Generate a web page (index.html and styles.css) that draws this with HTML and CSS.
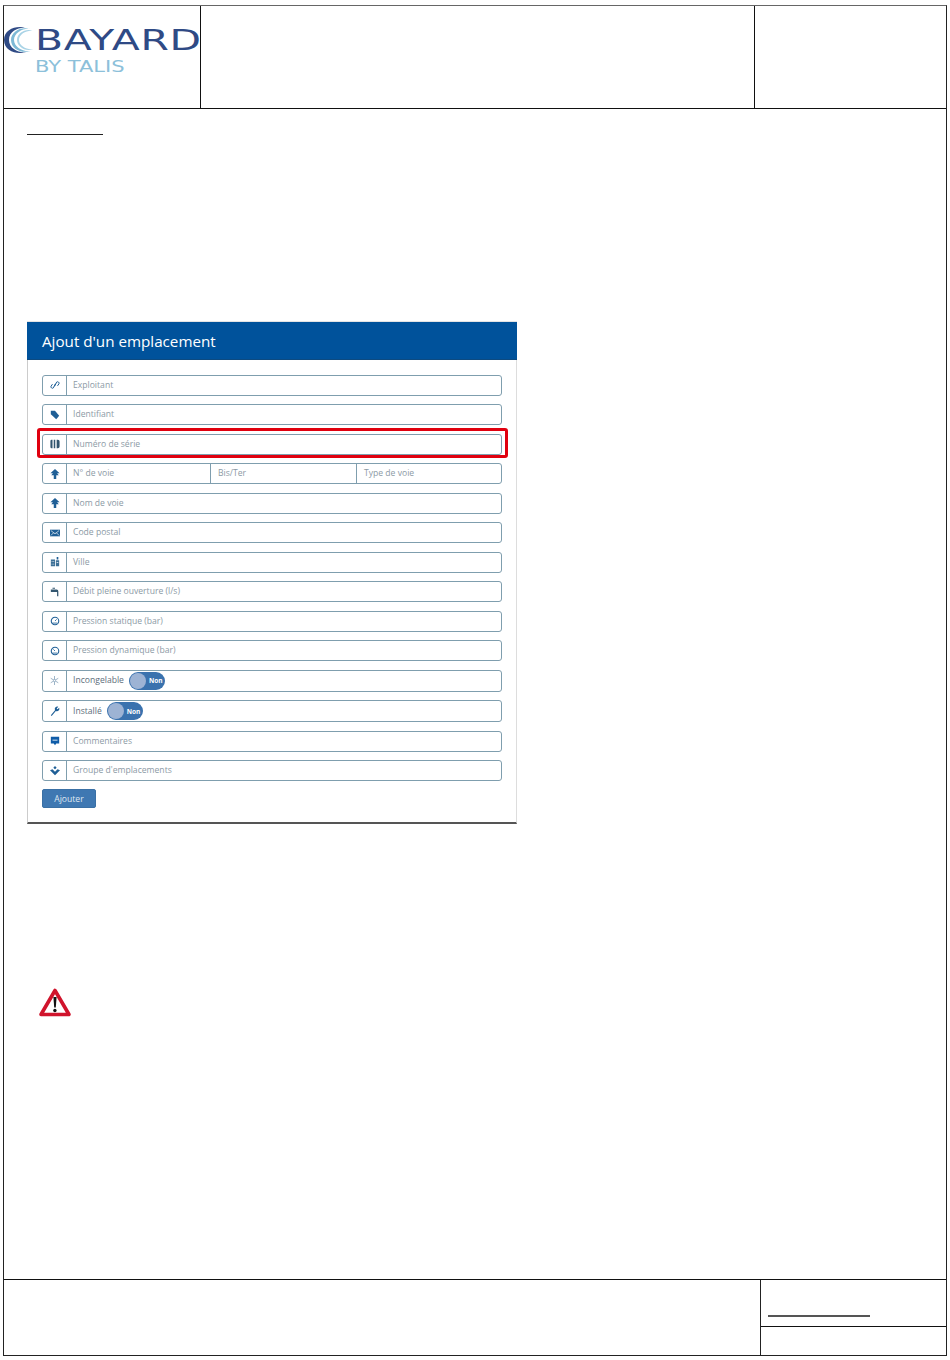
FILE: index.html
```html
<!DOCTYPE html>
<html lang="fr">
<head>
  <meta charset="UTF-8">
  <title>Ajout d'un emplacement</title>
  <link rel="stylesheet" href="styles.css">
</head>
<body>
  <div class="page">
    <header class="doc-head">
      <div class="logo">
        <svg class="logo-mark" viewBox="0 0 32 28" width="32" height="28">
          <path d="M22 2C13 -1 0 3 0 14s13 15 22 12C15 27 5 23 5 14S15 1 22 2z" fill="#2f4a85"/>
          <path d="M26 3C18 0 7 5 7 14s11 14 19 11C19 26 10 21 10 14S19 2 26 3z" fill="#7db9d6"/>
          <path d="M29 5C22 2 13 7 13 14s9 12 16 9C23 24 15 20 15 14S23 4 29 5z" fill="#a9d3e6"/>
        </svg>
        <div class="logo-text">
          <div class="logo-name">BAYARD</div>
          <div class="logo-sub">BY TALIS</div>
        </div>
      </div>
      <div class="head-mid"></div>
      <div class="head-right"></div>
    </header>

    <main class="doc-main">
      <div class="blank-title"></div>

      <section class="card">
        <h2 class="card-head">Ajout d'un emplacement</h2>
        <div class="card-body">
          <div class="row">
            <span class="ico"><svg viewBox="0 0 12 12" width="10" height="10"><path d="M5.500 7.500L8 2.500a1.800 1.800 0 0 1 2.800 2L9 7M6.500 4.500L4 9.500a1.800 1.800 0 0 1-2.800-2L3 5" fill="none" stroke="#1f5f96" stroke-width="1.200"/></svg></span>
            <span class="field">Exploitant</span>
          </div>
          <div class="row">
            <span class="ico"><svg viewBox="0 0 12 12" width="10" height="10"><path d="M1 1h5l5 6-3.500 4L1 5z" fill="#1f5f96"/></svg></span>
            <span class="field">Identifiant</span>
          </div>
          <div class="row row-marked">
            <span class="ico"><svg viewBox="0 0 12 12" width="10" height="10"><path d="M.5 2.500A1.500 1.500 0 0 1 2 1h1v10H2A1.500 1.500 0 0 1 .5 9.500zM4.500 1h1.800v10H4.500zM8 1h1.500A2 2 0 0 1 11.500 3v6a2 2 0 0 1-2 2H8z" fill="#33566f"/></svg></span>
            <span class="field">Numéro de série</span>
          </div>
          <div class="row">
            <span class="ico"><svg viewBox="0 0 12 12" width="10" height="10"><path d="M6 0l5.500 5H8.500l2 2.500H7.500V12h-3V7.500H1.500l2-2.500H.5z" fill="#1f5f96"/></svg></span>
            <span class="field field-third">N° de voie</span>
            <span class="field field-third">Bis/Ter</span>
            <span class="field field-third">Type de voie</span>
          </div>
          <div class="row">
            <span class="ico"><svg viewBox="0 0 12 12" width="10" height="10"><path d="M6 0l5.500 5H8.500l2 2.500H7.500V12h-3V7.500H1.500l2-2.500H.5z" fill="#1f5f96"/></svg></span>
            <span class="field">Nom de voie</span>
          </div>
          <div class="row">
            <span class="ico"><svg viewBox="0 0 12 12" width="10" height="10"><path d="M0 2h12v8H0z" fill="#1f5f96"/><path d="M1 3l5 4 5-4M1 9l3.500-3.500M11 9L7.500 5.500" fill="none" stroke="#fff" stroke-width=".8"/></svg></span>
            <span class="field">Code postal</span>
          </div>
          <div class="row">
            <span class="ico"><svg viewBox="0 0 12 12" width="10" height="10"><path d="M1 3h5v8H1zM7 4h4v7H7z" fill="#3b6f96"/><path d="M8 0h2v3H8z" fill="#1f5f96"/><path d="M2 5h1v1H2zM4 5h1v1H4zM2 8h1v1H2zM4 8h1v1H4zM8 6h2v1H8z" fill="#fff"/></svg></span>
            <span class="field">Ville</span>
          </div>
          <div class="row">
            <span class="ico"><svg viewBox="0 0 12 12" width="10" height="10"><path d="M1 3h7a2 2 0 0 1 2 2v6H8.500V6H1zM3 1h3v1H3z" fill="#33566f"/></svg></span>
            <span class="field">Débit pleine ouverture (l/s)</span>
          </div>
          <div class="row">
            <span class="ico"><svg viewBox="0 0 12 12" width="10" height="10"><circle cx="6" cy="6" r="4.500" fill="none" stroke="#1f5f96" stroke-width="1.300"/><path d="M3 8.500h6M6 6l2-2" stroke="#1f5f96"/></svg></span>
            <span class="field">Pression statique (bar)</span>
          </div>
          <div class="row">
            <span class="ico"><svg viewBox="0 0 12 12" width="10" height="10"><circle cx="6" cy="6" r="4.500" fill="none" stroke="#1f5f96" stroke-width="1.300"/><path d="M3 8.500h6M6 6L4 4" stroke="#1f5f96"/></svg></span>
            <span class="field">Pression dynamique (bar)</span>
          </div>
          <div class="row row-switch">
            <span class="ico"><svg viewBox="0 0 12 12" width="9" height="9"><path d="M6 0v12M1 3l10 6M11 3L1 9" stroke="#7d9cb5" stroke-width="1"/><circle cx="6" cy="6" r="1.500" fill="#fff" stroke="#7d9cb5" stroke-width=".8"/></svg></span>
            <span class="field field-switch">Incongelable
              <span class="switch"><span class="knob"></span><span class="switch-label">Non</span></span>
            </span>
          </div>
          <div class="row row-switch">
            <span class="ico"><svg viewBox="0 0 12 12" width="10" height="10"><path d="M1 11l5-6a3 3 0 0 1 4-4L8 3l1 1 2-2a3 3 0 0 1-4 4l-5 6z" fill="#1f5f96"/></svg></span>
            <span class="field field-switch">Installé
              <span class="switch"><span class="knob"></span><span class="switch-label">Non</span></span>
            </span>
          </div>
          <div class="row">
            <span class="ico"><svg viewBox="0 0 12 12" width="10" height="10"><path d="M1 1h10v8H7.500L6 11 4.500 9H1z" fill="#0f5ca8"/><path d="M3 5h6" stroke="#fff"/></svg></span>
            <span class="field">Commentaires</span>
          </div>
          <div class="row">
            <span class="ico"><svg viewBox="0 0 12 12" width="10" height="10"><path d="M6 0l2 2-2 2-2-2zM0 5l3-1 3 3 3-3 3 1-3 3-3 3-3-3z" fill="#1f5f96"/></svg></span>
            <span class="field">Groupe d'emplacements</span>
          </div>
          <button class="btn">Ajouter</button>
        </div>
      </section>

      <svg class="warn" viewBox="0 0 34 32" width="34" height="32">
        <path d="M17 3.500L31 27.500H3z" fill="#fff" stroke="#d0142c" stroke-width="3.600" stroke-linejoin="round"/>
        <path d="M15.400 10h3.200l-.8 10.500h-1.600z" fill="#111"/>
        <circle cx="16.900" cy="23.500" r="1.700" fill="#111"/>
      </svg>
    </main>

    <footer class="doc-foot">
      <div class="foot-left"></div>
      <div class="foot-right">
        <div class="foot-top"><div class="foot-line"></div></div>
        <div class="foot-bottom"></div>
      </div>
    </footer>
  </div>
</body>
</html>
```

FILE: styles.css
```css
* { box-sizing: border-box; margin: 0; padding: 0; }
body {
  background: #fff;
  font-family: "Open Sans", Arial, sans-serif;
  color: #333;
}
.page {
  width: 944px;
  height: 1351px;
  margin: 5px 0 0 3px;
  border: 1px solid #222;
  border-top-color: #666;
  display: flex;
  flex-direction: column;
}

/* page header */
.doc-head {
  display: grid;
  grid-template-columns: 197px 554px 1fr;
  height: 103px;
  border-bottom: 1px solid #111;
}
.logo {
  display: flex;
  align-items: flex-start;
  border-right: 1px solid #111;
  padding: 20px 0 0 0;
  overflow: hidden;
}
.logo-mark { flex: none; margin-right: -1px; }
.logo-name {
  font-family: "DejaVu Sans", sans-serif;
  font-size: 29px;
  line-height: 28px;
  color: #2f4a85;
  letter-spacing: .5px;
  transform: scaleX(1.41);
  transform-origin: left;
}
.logo-sub {
  font-family: "DejaVu Sans", sans-serif;
  font-size: 15px;
  line-height: 16px;
  margin-top: 5px;
  color: #8cc0da;
  transform: scaleX(1.4);
  transform-origin: left;
}
.head-mid { border-right: 1px solid #111; }

/* main */
.doc-main {
  flex: 1;
  padding: 25px 0 0 23px;
}
.blank-title {
  width: 76px;
  height: 1px;
  background: #222;
}
.card {
  width: 490px;
  margin-top: 187px;
  border-left: 1px solid #ccc;
  border-right: 1px solid #ddd;
  border-bottom: 2px solid #555;
  box-shadow: 0 -1px 0 #e4e4e4;
}
.card-head {
  height: 38px;
  margin: 0 -1px;
  padding-left: 15px;
  background: #00529b;
  border-bottom: 1px solid #0d4a80;
  color: #fff;
  font-size: 15.200px;
  font-weight: 400;
  line-height: 38px;
}
.card-body {
  display: flex;
  flex-direction: column;
  gap: 8.5px;
  padding: 14.500px 14px 13.500px 14px;
}
.row {
  display: flex;
  height: 21px;
  border: 1px solid #7f9eae;
  border-radius: 3px;
  background: #fff;
}
.row-switch { height: 22px; }
.row-marked { position: relative; }
.row-marked::after {
  content: "";
  position: absolute;
  top: -7px;
  left: -6px;
  right: -7px;
  bottom: -4px;
  border: 3px solid #e0000f;
  border-radius: 3px;
}
.ico {
  flex: none;
  width: 24px;
  display: flex;
  align-items: center;
  justify-content: center;
  border-right: 1px solid #7f9eae;
}
.field {
  flex: 1;
  padding-left: 6px;
  color: #8c9aa5;
  font-size: 8.600px;
  line-height: 19px;
  white-space: nowrap;
}
.field-third { flex: none; width: 146px; border-right: 1px solid #7f9eae; padding-left: 7px; }
.field-third:nth-child(2) { width: 144px; padding-left: 6px; }
.field-third:last-child { flex: 1; border-right: none; }
.field-switch {
  display: flex;
  align-items: center;
  gap: 5px;
  color: #5d6e7a;
}
.switch {
  display: flex;
  align-items: center;
  width: 36px;
  height: 18px;
  border-radius: 9px;
  background: #3a72ae;
  padding-left: 1px;
}
.knob {
  width: 16px;
  height: 16px;
  border-radius: 50%;
  background: #9db3d4;
}
.switch-label {
  color: #fff;
  font-size: 6.500px;
  font-weight: 700;
  margin-left: 3px;
}
.btn {
  align-self: flex-start;
  width: 54px;
  height: 19px;
  margin-top: -.5px;
  border: 1px solid #3a70a5;
  border-radius: 2px;
  background: #3f78b2;
  color: #dfe8f2;
  font-family: inherit;
  font-size: 8.600px;
}
.warn {
  display: block;
  margin: 163px 0 0 11px;
}

/* page footer */
.doc-foot {
  display: grid;
  grid-template-columns: 756px 1fr;
  height: 76px;
  border-top: 1px solid #111;
}
.foot-right {
  display: flex;
  flex-direction: column;
  border-left: 1px solid #222;
}
.foot-top {
  height: 47px;
  padding: 35px 0 0 7px;
  border-bottom: 1px solid #111;
}
.foot-line {
  width: 102px;
  height: 2px;
  background: #555;
}
```
